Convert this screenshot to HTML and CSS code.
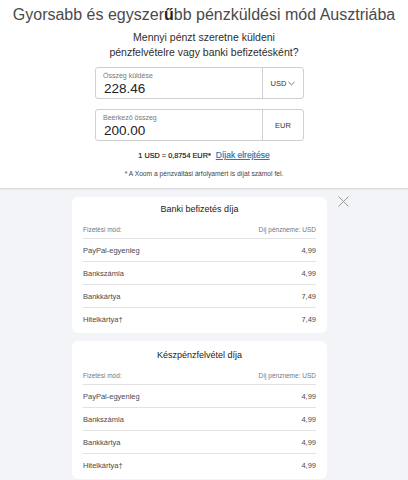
FILE: index.html
```html
<!DOCTYPE html>
<html lang="hu">
<head>
<meta charset="utf-8">
<title>Xoom</title>
<link rel="stylesheet" href="styles.css">
</head>
<body>
<div class="top">
  <h1>Gyorsabb és egyszer<span class="odd">ű</span>bb pénzküldési mód Ausztriába</h1>
  <p class="sub">Mennyi pénzt szeretne küldeni<br>pénzfelvételre vagy banki befizetésként?</p>
  <div class="field">
    <div class="amount"><span class="label">Összeg küldése</span><span class="value">228.46</span></div>
    <div class="cur">USD<svg class="chev" viewBox="0 0 8 5" width="7" height="5"><path d="M0.5 0.7 L4 4 L7.5 0.7" fill="none" stroke="#555" stroke-width="0.9"/></svg></div>
  </div>
  <div class="field">
    <div class="amount"><span class="label">Beérkező összeg</span><span class="value">200.00</span></div>
    <div class="cur">EUR</div>
  </div>
  <p class="rate">1 USD = 0,8754 EUR* <a href="#" class="link">Díjak elrejtése</a></p>
  <p class="note">* A Xoom a pénzváltási árfolyamért is díjat számol fel.</p>
</div>
<div class="fees">
  <button class="close" aria-label="Bezárás"><svg viewBox="0 0 11 11" width="11" height="11"><path d="M0.5 0.5 L10.5 10.5 M10.5 0.5 L0.5 10.5" stroke="#9a9a9a" stroke-width="1" fill="none"/></svg></button>
  <section class="card">
    <h2>Banki befizetés díja</h2>
    <div class="head"><span>Fizetési mód:</span><span>Díj pénzneme: USD</span></div>
    <div class="row"><span>PayPal-egyenleg</span><span>4,99</span></div>
    <div class="row"><span>Bankszámla</span><span>4,99</span></div>
    <div class="row"><span>Bankkártya</span><span>7,49</span></div>
    <div class="row"><span>Hitelkártya†</span><span>7,49</span></div>
  </section>
  <section class="card card2">
    <h2>Készpénzfelvétel díja</h2>
    <div class="head"><span>Fizetési mód:</span><span>Díj pénzneme: USD</span></div>
    <div class="row"><span>PayPal-egyenleg</span><span>4,99</span></div>
    <div class="row"><span>Bankszámla</span><span>4,99</span></div>
    <div class="row"><span>Bankkártya</span><span>4,99</span></div>
    <div class="row"><span>Hitelkártya†</span><span>4,99</span></div>
  </section>
</div>
</body>
</html>
```
FILE: styles.css
```css
* { box-sizing: border-box; }
html, body { margin: 0; padding: 0; }
body {
  width: 408px;
  height: 480px;
  overflow: hidden;
  font-family: "Liberation Sans", Arial, sans-serif;
  background: #f3f4f7;
  color: #333;
}
.top {
  background: #fff;
  padding: 5px 0 9px;
  text-align: center;
  box-shadow: 0 1px 2px rgba(0,0,0,0.14);
  position: relative;
  z-index: 1;
}
h1 {
  margin: 0;
  font-size: 16px;
  line-height: 20px;
  font-weight: normal;
  color: #4a4a4a;
}
h1 .odd { font-weight: bold; color: #222; }
.sub {
  margin: 5px 0 0;
  font-size: 10.5px;
  line-height: 15px;
  color: #2e2e2e;
}
.field {
  display: flex;
  width: 209px;
  height: 32px;
  margin: 7px 0 0 95px;
  border: 1px solid #cfcfcf;
  border-radius: 3px;
  text-align: left;
}
.field + .field { margin-top: 10px; }
.amount {
  flex: 1;
  display: flex;
  flex-direction: column;
  padding: 3px 0 0 7px;
}
.label {
  font-size: 7px;
  line-height: 10px;
  color: #777;
}
.value {
  font-size: 13.5px;
  line-height: 16px;
  color: #222;
  padding-left: 1px;
}
.cur {
  width: 41px;
  border-left: 1px solid #cfcfcf;
  display: flex;
  align-items: center;
  justify-content: center;
  gap: 2px;
  font-size: 7.5px;
  color: #333;
}
.chev { display: block; }
.rate {
  margin: 8px 0 0;
  font-size: 7.3px;
  line-height: 12px;
  color: #111;
  font-weight: normal;
  -webkit-text-stroke: 0.15px #111;
}
.link {
  font-size: 8.5px;
  color: #2a78b5;
  text-decoration: underline;
  -webkit-text-stroke: 0.2px #2a78b5;
  margin-left: 3px;
}
.note {
  margin: 7px 0 0;
  font-size: 6.7px;
  line-height: 10px;
  color: #444;
}
.fees {
  position: relative;
  padding: 9px 0 20px 72px;
}
.close {
  position: absolute;
  left: 338px;
  top: 8px;
  padding: 0;
  border: 0;
  background: none;
  line-height: 0;
}
.card {
  width: 255px;
  background: #fff;
  border-radius: 6px;
  padding: 0 11px 3px;
}
.card2 { margin-top: 8px; padding-top: 2px; }
.card h2 {
  margin: 0;
  font-size: 9px;
  line-height: 24px;
  font-weight: normal;
  text-align: center;
  color: #222;
}
.head {
  display: flex;
  justify-content: space-between;
  align-items: center;
  height: 17px;
  font-size: 6.5px;
  color: #777;
}
.row {
  display: flex;
  justify-content: space-between;
  align-items: center;
  height: 23px;
  border-top: 1px solid #e2e2e2;
  font-size: 7.5px;
  color: #4a4a4a;
}
```
